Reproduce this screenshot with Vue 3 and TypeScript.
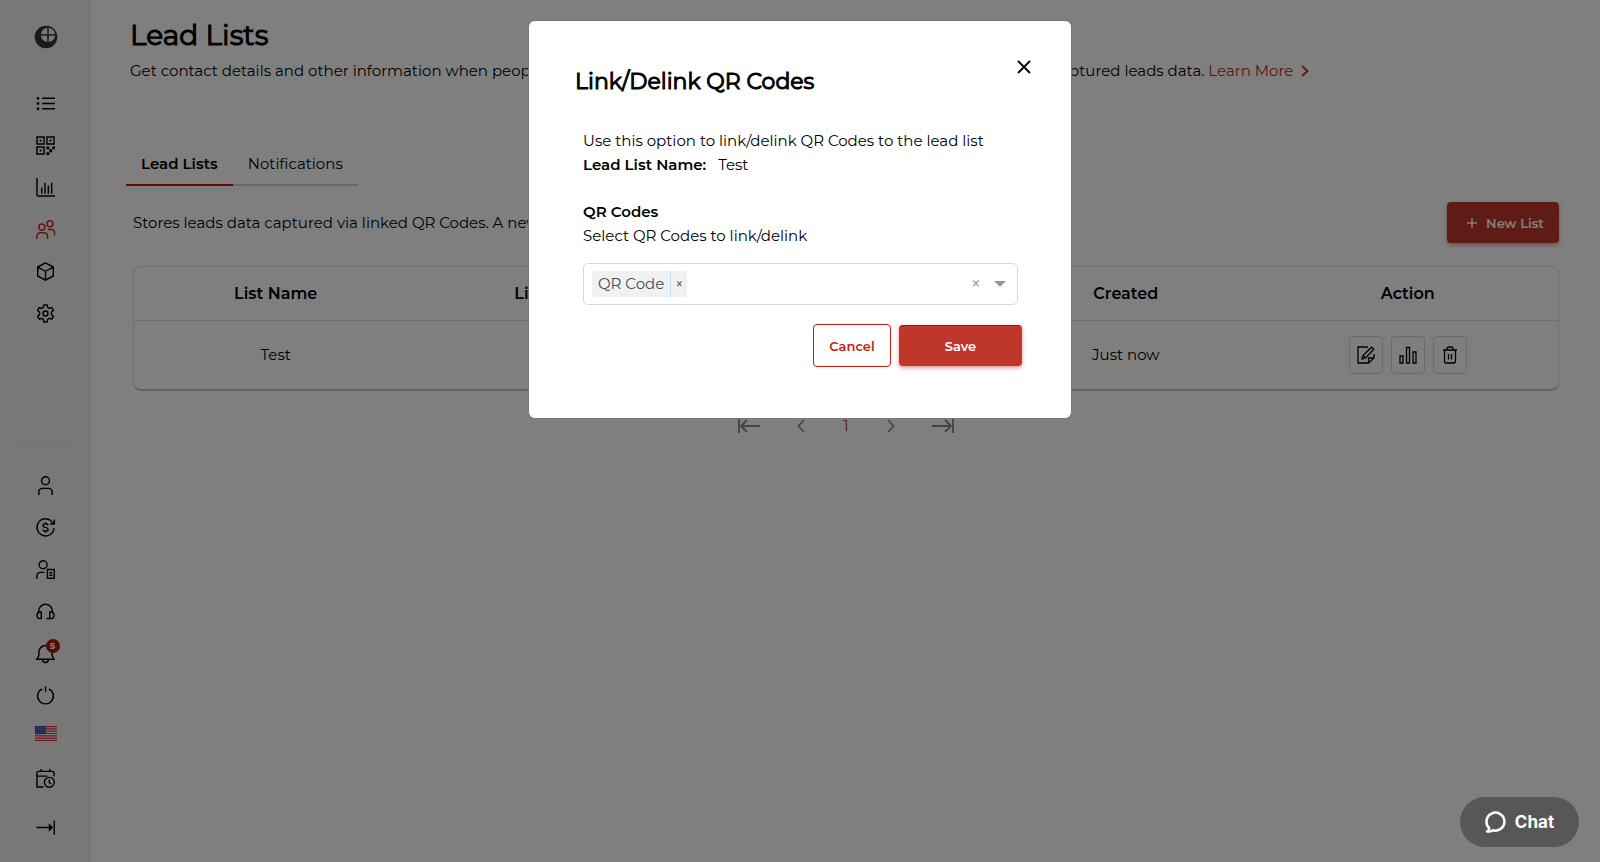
<script setup lang="ts">
import { ref } from 'vue'

interface NavItem {
  id: string
  label: string
  active?: boolean
  badge?: number
}

const mainNav: NavItem[] = [
  { id: 'list', label: 'Overview' },
  { id: 'qr', label: 'QR Codes' },
  { id: 'chart', label: 'Analytics' },
  { id: 'leads', label: 'Lead Lists', active: true },
  { id: 'box', label: 'Assets' },
  { id: 'gear', label: 'Settings' },
]

const accountNav: NavItem[] = [
  { id: 'user', label: 'Account' },
  { id: 'billing', label: 'Billing' },
  { id: 'members', label: 'Members' },
  { id: 'support', label: 'Support' },
  { id: 'bell', label: 'Alerts', badge: 5 },
  { id: 'power', label: 'Log out' },
  { id: 'flag', label: 'Language' },
  { id: 'schedule', label: 'Schedule' },
  { id: 'expand', label: 'Expand menu' },
]

const query = ref('')
const linked = ref<string[]>(['QR Code'])
const remove = (name: string) => {
  linked.value = linked.value.filter((n) => n !== name)
}
</script>

<template>
  <div class="app">
    <aside class="sidebar">
      <a class="logo" href="#" aria-label="Home">
        <svg width="24" height="24" viewBox="0 0 24 24">
          <circle cx="12" cy="12" r="11.3" fill="#333" />
          <circle cx="14" cy="10" r="7.2" fill="#f1f1f1" />
          <path d="M14 2v16M6 10h16" stroke="#333" stroke-width="1.5" />
        </svg>
      </a>
      <nav class="nav" aria-label="Main">
        <a v-for="item in mainNav" :key="item.id" href="#" class="nav-item" :class="{ active: item.active }" :aria-label="item.label">
          <svg v-if="item.id === 'list'" class="icon" viewBox="0 0 20 20">
            <path d="M6.5 4.5H20M6.5 10H20M6.5 15.500H20" />
            <path class="solid" d="M.8 3.300h2.600v2.600H.8zM.8 8.700h2.600v2.600H.8zM.8 14.200h2.600v2.600H.8z" />
          </svg>
          <svg v-else-if="item.id === 'qr'" class="icon" viewBox="0 0 20 20">
            <path d="M1 1h7.500v7.500H1zM11.500 1H19v7.500h-7.500zM1 11.500h7.500V19H1z" />
            <path class="solid" d="M3.800 3.800h2v2h-2zM14.300 3.800h2v2h-2zM3.800 14.300h2v2h-2zM11 11h3v3h-3zM17 11h3v3h-3zM14 14h3v3h-3zM11 17h3v3h-3z" />
          </svg>
          <svg v-else-if="item.id === 'chart'" class="icon" viewBox="0 0 20 20">
            <path d="M1 0v17q0 2 2 2h17M6 16.500V10M9.500 16.500V5M13 16.500V8M16.500 16.500V5" />
          </svg>
          <svg v-else-if="item.id === 'leads'" class="icon" viewBox="0 0 20 20">
            <circle cx="6.200" cy="7.500" r="3.200" /><circle cx="14.700" cy="4" r="3.200" />
            <path d="M.8 20v-2.500q0-4 4-4h3.400q4 0 4 4V20M12.500 10H16q3.500 0 3.500 3.500V16.500" />
          </svg>
          <svg v-else-if="item.id === 'box'" class="icon" viewBox="0 0 20 20">
            <path d="M10 .9l8.200 4.400v9.400L10 19.100 1.800 14.700V5.300zM1.800 5.300L10 9.800l8.200-4.500M10 9.800v9.300" />
          </svg>
          <svg v-else class="icon" viewBox="0 0 20 20">
            <circle cx="10" cy="10" r="2.600" />
            <path d="M8.300.9h3.400l.5 2.600 1.900 1.100 2.500-.9 1.700 3-2 1.700v2.800l2 1.900-1.700 2.900-2.500-.9-1.900 1.100-.5 2.700H8.300l-.5-2.700-1.900-1.100-2.500.9-1.700-2.900 2-1.900V8.400l-2-1.700 1.700-3 2.500.9 1.900-1.100z" />
          </svg>
        </a>
      </nav>
      <nav class="nav account" aria-label="Account">
        <a v-for="item in accountNav" :key="item.id" href="#" class="nav-item" :class="item.id" :aria-label="item.label">
          <svg v-if="item.id === 'user'" class="icon" viewBox="0 0 20 20">
            <circle cx="10" cy="5" r="4.200" /><path d="M3 20v-3q0-4 4-4h6q4 0 4 4v3" />
          </svg>
          <svg v-else-if="item.id === 'billing'" class="icon" viewBox="0 0 20 20">
            <path d="M19 10.500a9 9 0 1 1-2.300-6.700L19 6M19.300 1.500V6.300h-4.500" />
            <path d="M12.800 7.500q-.6-1.500-2.800-1.500-2.600 0-2.600 1.900 0 1.500 2.600 2t2.700 2q0 2-2.700 2-2.400 0-2.900-1.700M10 4.500V6M10 14v1.500" />
          </svg>
          <svg v-else-if="item.id === 'members'" class="icon" viewBox="0 0 20 20">
            <circle cx="7.500" cy="5" r="4.200" /><path d="M.9 20v-3q0-4 4-4H9M12 10h7.200v9.200H12zM14 13.500h3.200M14 16h3.200" />
          </svg>
          <svg v-else-if="item.id === 'support'" class="icon" viewBox="0 0 20 20">
            <path d="M2.800 10.500V9.500a7.200 7.200 0 0 1 14.400 0v1M5.500 10.500v7H4a2.500 3 0 0 1 0-7zM14.500 10.500v7H16a2.500 3 0 0 0 0-7zM11 17.500h4" />
          </svg>
          <svg v-else-if="item.id === 'bell'" class="icon" viewBox="0 0 20 20">
            <path d="M1 16L3 12.500V8.500a7 7 0 0 1 14 0v4L19 16zM7 16.500a3 3 0 0 0 6 0" />
          </svg>
          <svg v-else-if="item.id === 'power'" class="icon" viewBox="0 0 20 20">
            <path d="M10 .5V6M6.500 3a8.300 8.300 0 1 0 7 0" />
          </svg>
          <svg v-else-if="item.id === 'flag'" class="flag-art" viewBox="0 0 22 15">
            <rect width="22" height="15" fill="#fff" />
            <path d="M0 .6h22M0 2.900h22M0 5.200h22M0 7.500h22M0 9.800h22M0 12.100h22M0 14.400h22" stroke="#e52b46" stroke-width="1.200" />
            <rect width="11" height="8.200" fill="#3755a5" />
            <path d="M1.500 1.800h9M1.500 4h9M1.500 6.200h9" stroke="#b9c6ea" stroke-width=".8" stroke-dasharray=".8 1.200" />
          </svg>
          <svg v-else-if="item.id === 'schedule'" class="icon" viewBox="0 0 20 20">
            <path d="M8 19H1V4.500Q1 2.500 3 2.500H17Q19 2.500 19 4.500V8M1 7.500h11M5.500 0v3M14.500 0v3" />
            <circle cx="14" cy="14" r="5.200" /><path d="M14 11v3.200l1.800 1.500" />
          </svg>
          <svg v-else class="icon" viewBox="0 0 20 20">
            <path d="M.5 10H16M19.200 2.500v15" /><path class="solid" d="M13.500 5.500L18 10l-4.500 4.500z" />
          </svg>
          <span v-if="item.badge" class="badge">{{ item.badge }}</span>
        </a>
      </nav>
    </aside>

    <main class="page">
      <h1>Lead Lists</h1>
      <div class="intro">
        <p>Get contact details and other information when people</p>
        <p>
          captured leads data.
          <a href="#" class="more">Learn More
            <svg width="8" height="12" viewBox="0 0 8 12"><path d="M1 1l5.500 5L1 11" fill="none" stroke="currentColor" stroke-width="1.800" /></svg>
          </a>
        </p>
      </div>

      <div class="tabs" role="tablist">
        <button type="button" role="tab" aria-selected="true" class="tab selected">Lead Lists</button>
        <button type="button" role="tab" aria-selected="false" class="tab">Notifications</button>
      </div>

      <div class="toolbar">
        <p>Stores leads data captured via linked QR Codes. A new</p>
        <button type="button" class="new-list">
          <svg width="12" height="12" viewBox="0 0 12 12"><path d="M6 1v10M1 6h10" stroke="currentColor" stroke-width="1.500" /></svg>
          New List
        </button>
      </div>

      <div class="table-card">
        <table>
          <colgroup><col class="even" /><col class="even" /><col class="even" /><col class="even" /><col /></colgroup>
          <thead>
            <tr><th>List Name</th><th>List Owner</th><th></th><th>Created</th><th>Action</th></tr>
          </thead>
          <tbody>
            <tr>
              <td>Test</td><td></td><td></td><td>Just now</td>
              <td>
                <div class="actions">
                  <button type="button" aria-label="Edit">
                    <svg width="18" height="18" viewBox="0 0 18 18"><path d="M11 1H1v16h10.500L17 12V8M11.500 17v-5H17M5 13l1-3.500L14.500 1.200 16.800 3.300 8.500 12zM6 9.500L8.500 12" /></svg>
                  </button>
                  <button type="button" aria-label="Statistics">
                    <svg width="18" height="18" viewBox="0 0 18 18"><path d="M1 10h3v7H1zM7.500 1.500h3V17h-3zM14 6h3v11h-3z" /></svg>
                  </button>
                  <button type="button" aria-label="Delete">
                    <svg width="18" height="18" viewBox="0 0 18 18"><path d="M2 4h14M6 4V2.500Q6 1 7.500 1h3Q12 1 12 2.500V4M3.500 4v11q0 2 2 2h7q2 0 2-2V4M7.500 8v5.500M10.500 8v5.500" /></svg>
                  </button>
                </div>
              </td>
            </tr>
          </tbody>
        </table>
      </div>

      <nav class="pager" aria-label="Pages">
        <button type="button" aria-label="First page"><svg width="22" height="16" viewBox="0 0 22 16"><path d="M1 1v14M22 8H3M9 2L3 8l6 6" /></svg></button>
        <button type="button" aria-label="Previous page"><svg width="8" height="14" viewBox="0 0 8 14"><path d="M7 1L1.500 7 7 13" /></svg></button>
        <button type="button" class="current" aria-current="page">1</button>
        <button type="button" aria-label="Next page"><svg width="8" height="14" viewBox="0 0 8 14"><path d="M1 1l5.500 6L1 13" /></svg></button>
        <button type="button" aria-label="Last page"><svg width="22" height="16" viewBox="0 0 22 16"><path d="M21 1v14M0 8h19M13 2l6 6-6 6" /></svg></button>
      </nav>
    </main>

    <div class="overlay">
      <section class="modal" role="dialog" aria-modal="true" aria-labelledby="modal-title">
        <button type="button" class="close" aria-label="Close">
          <svg width="14" height="14" viewBox="0 0 14 14"><path d="M1 1l12 12M13 1L1 13" stroke="currentColor" stroke-width="1.800" /></svg>
        </button>
        <h2 id="modal-title">Link/Delink QR Codes</h2>
        <div class="modal-body">
          <p>Use this option to link/delink QR Codes to the lead list</p>
          <p class="name-row"><strong>Lead List Name:</strong><span>Test</span></p>
          <label class="field" for="qr-select">
            <strong>QR Codes</strong>
            <span>Select QR Codes to link/delink</span>
          </label>
          <div class="select">
            <span v-for="name in linked" :key="name" class="tag">
              <span class="tag-name">{{ name }}</span>
              <button type="button" :aria-label="`Remove ${name}`" @click="remove(name)">×</button>
            </span>
            <input id="qr-select" v-model="query" type="text" role="combobox" aria-expanded="false" />
            <button type="button" class="clear" aria-label="Clear all" @click="linked = []">×</button>
            <button type="button" class="arrow" aria-label="Open options">
              <svg width="12" height="6" viewBox="0 0 12 6"><path d="M0 0h12L6 6z" fill="#999" /></svg>
            </button>
          </div>
        </div>
        <div class="modal-actions">
          <button type="button" class="cancel">Cancel</button>
          <button type="button" class="save">Save</button>
        </div>
      </section>
    </div>

    <button type="button" class="chat">
      <svg width="22" height="22" viewBox="0 0 22 22"><path d="M4.300 17.200A9 9 0 1 1 8 19.300Q5.500 21 2 20.500 4.200 19.200 4.300 17.200z" fill="none" stroke="#fff" stroke-width="2.500" stroke-linejoin="round" /></svg>
      Chat
    </button>
  </div>
</template>

<style>
body {
  margin: 0;
}
</style>

<style scoped>
.app {
  display: flex;
  min-height: 100vh;
  background: #fff;
  color: #000;
  font-family: Montserrat, Inter, "Liberation Sans", sans-serif;
  font-size: 15px;
  line-height: 24px;
}
.app * {
  box-sizing: border-box;
}
button,
input {
  font: inherit;
  color: inherit;
  padding: 0;
  border: 0;
  background: none;
}
button {
  cursor: pointer;
}
h1,
h2,
p {
  margin: 0;
}
strong {
  font-weight: 600;
}

.sidebar {
  flex: 0 0 91px;
  height: 100vh;
  display: flex;
  flex-direction: column;
  align-items: center;
  padding: 25px 0 14px;
  background: #f1f1f1;
}
.logo {
  height: 24px;
}
.nav {
  display: flex;
  flex-direction: column;
  align-items: center;
  margin-top: 33px;
}
.nav-item {
  position: relative;
  display: grid;
  place-items: center;
  width: 42px;
  height: 42px;
  color: #000;
}
.nav-item.active {
  color: #c8281b;
}
.icon {
  width: 19px;
  height: 19px;
  overflow: visible;
  fill: none;
  stroke: currentColor;
  stroke-width: 1.5;
}
.icon .solid {
  fill: currentColor;
  stroke: none;
}
.account {
  width: 62px;
  margin-top: auto;
  padding-top: 16px;
  border-top: 1px solid #e9e9e9;
}
.nav-item.flag {
  height: 34px;
}
.flag-art {
  width: 22px;
  height: 15px;
}
.nav-item.schedule {
  margin-top: 7px;
}
.nav-item.expand {
  margin-top: 7px;
}
.badge {
  position: absolute;
  top: 7px;
  right: 7px;
  width: 14px;
  height: 14px;
  border-radius: 50%;
  background: #a81606;
  color: #fff;
  font-size: 9px;
  font-weight: 700;
  line-height: 14px;
  text-align: center;
}

.page {
  flex: 1;
  min-width: 0;
  padding: 15px 41px 0 42px;
}
h1 {
  margin-left: -3px;
  font-size: 28px;
  font-weight: 400;
  line-height: 40px;
  -webkit-text-stroke: 1px currentColor;
}
.intro {
  display: flex;
  gap: 508px;
  margin: 4px 0 0 -3px;
  white-space: nowrap;
}
.more {
  color: #c8281b;
  text-decoration: none;
}
.more svg {
  margin-left: 4px;
  vertical-align: -1px;
}
.tabs {
  display: flex;
  margin: 61px 0 0 -7px;
}
.tab {
  padding: 8px 15px;
  border-bottom: 2px solid #d0d0d0;
}
.tab.selected {
  border-color: #c8140a;
  font-weight: 600;
}
.toolbar {
  display: flex;
  justify-content: space-between;
  align-items: center;
  margin-top: 16px;
}
.new-list {
  display: flex;
  align-items: center;
  justify-content: center;
  gap: 8px;
  width: 112px;
  height: 41px;
  padding-left: 4px;
  border-radius: 4px;
  background: #be372a;
  box-shadow: 0 2px 4px rgba(190, 55, 42, 0.5);
  color: #fff;
  font-size: 13px;
  font-weight: 600;
}
.table-card {
  margin-top: 23px;
  border: 1px solid #dcdcdc;
  border-bottom: 2px solid #c4c4c4;
  border-radius: 8px;
}
table {
  width: 100%;
  table-layout: fixed;
  border-collapse: collapse;
}
.even {
  width: 19.9%;
}
th,
td {
  padding: 0;
  text-align: center;
}
th {
  height: 53px;
  padding-top: 1px;
  border-bottom: 1px solid #dcdcdc;
  font-size: 16px;
  font-weight: 600;
}
td {
  height: 69px;
}
th:last-child,
td:last-child {
  padding-right: 10px;
}
.actions {
  display: flex;
  justify-content: center;
  gap: 8px;
}
.actions button {
  display: grid;
  place-items: center;
  width: 34px;
  height: 38px;
  border: 1px solid #d6d6d6;
  border-radius: 4px;
}
.actions svg {
  fill: none;
  stroke: #000;
  stroke-width: 1.3;
}
.pager {
  display: flex;
  justify-content: center;
  align-items: center;
  gap: 37px;
  margin-top: 23px;
}
.pager button {
  display: grid;
  place-items: center;
  min-width: 8px;
}
.pager svg {
  fill: none;
  stroke: #82898f;
  stroke-width: 1.8;
}
.pager .current {
  color: #c8281b;
}

.overlay {
  position: fixed;
  inset: 0;
  display: flex;
  justify-content: center;
  align-items: flex-start;
  padding-top: 20px;
  background: rgba(0, 0, 0, 0.5);
}
.modal {
  position: relative;
  width: 544px;
  padding: 44px 49px 51px 46px;
  border: 1px solid #777;
  border-radius: 7px;
  background: #fff;
}
.close {
  position: absolute;
  top: 39px;
  right: 40px;
  width: 14px;
  height: 14px;
  display: grid;
}
h2 {
  font-size: 22px;
  font-weight: 400;
  line-height: 34px;
  -webkit-text-stroke: 1px currentColor;
}
.modal-body {
  padding: 30px 4px 0 8px;
}
.name-row {
  display: flex;
  gap: 12px;
}
.field {
  display: flex;
  flex-direction: column;
  margin-top: 23px;
}
.select {
  display: flex;
  align-items: center;
  height: 42px;
  margin-top: 15px;
  padding: 0 11px 0 8px;
  border: 1px solid #d4d9de;
  border-radius: 5px;
}
.tag {
  display: flex;
  height: 26px;
  border-radius: 2px;
  background: #f1f1f1;
  color: #444d56;
  line-height: 26px;
}
.tag-name {
  padding: 0 6px;
  border-right: 1px solid #c2e0ff;
}
.tag button {
  width: 16px;
  font-size: 14px;
}
.select input {
  flex: 1;
  min-width: 0;
  outline: 0;
}
.clear {
  width: 12px;
  color: #999;
  font-size: 18px;
}
.arrow {
  display: grid;
  margin-left: 12px;
}
.modal-actions {
  display: flex;
  justify-content: flex-end;
  align-items: center;
  gap: 8px;
  margin-top: 19px;
}
.modal-actions button {
  border-radius: 4px;
  font-size: 13px;
  font-weight: 600;
}
.cancel {
  width: 78px;
  height: 43px;
  border: 1px solid #c61b0b;
  color: #c61b0b;
}
.save {
  width: 123px;
  height: 41px;
  border-top: 1px solid #c40000;
  background: #be372a;
  box-shadow: 0 2px 4px rgba(190, 55, 42, 0.5);
  color: #fff;
}
.chat {
  position: fixed;
  right: 21px;
  bottom: 15px;
  display: flex;
  align-items: center;
  justify-content: center;
  gap: 8px;
  width: 119px;
  height: 50px;
  border-radius: 25px;
  background: #575757;
  color: #fff;
  font-family: Inter, sans-serif;
  font-size: 17px;
  font-weight: 700;
}
</style>
